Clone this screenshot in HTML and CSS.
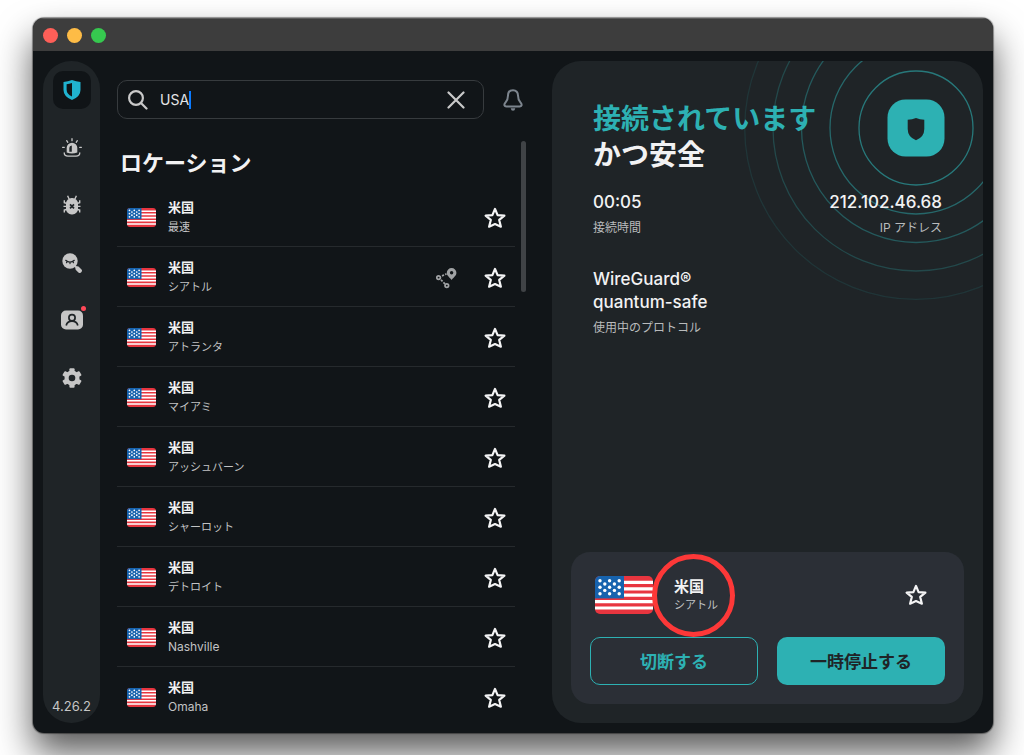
FILE: index.html
```html
<!DOCTYPE html>
<html lang="ja">
<head>
<meta charset="utf-8">
<meta name="viewport" content="width=device-width, initial-scale=1">
<title>VPN</title>
<link rel="stylesheet" href="styles.css">
</head>
<body>
<svg class="sprite" aria-hidden="true">
  <symbol id="flag" viewBox="0 0 58 38">
    <rect width="58" height="38" fill="#e8353f"/>
    <path d="M0 6.4h58M0 12.8h58M0 19.2h58M0 25.6h58M0 32h58" stroke="#fff" stroke-width="3.2"/>
    <rect width="29" height="22.4" fill="#1763ae"/>
    <g fill="#fff">
      <circle cx="5" cy="4.7" r="1.7"/><circle cx="14.6" cy="4.7" r="1.7"/><circle cx="24.2" cy="4.7" r="1.7"/>
      <circle cx="9.8" cy="8" r="1.7"/><circle cx="19.4" cy="8" r="1.7"/>
      <circle cx="5" cy="11.2" r="1.7"/><circle cx="14.6" cy="11.2" r="1.7"/><circle cx="24.2" cy="11.2" r="1.7"/>
      <circle cx="9.8" cy="14.4" r="1.7"/><circle cx="19.4" cy="14.4" r="1.7"/>
      <circle cx="5" cy="17.7" r="1.7"/><circle cx="14.6" cy="17.7" r="1.7"/><circle cx="24.2" cy="17.7" r="1.7"/>
    </g>
  </symbol>
  <symbol id="star" viewBox="0 0 22 22">
    <path d="M11 1.900l2.600 6.200 6.800.5-5.200 4.300 1.700 6.800-5.900-2.600-5.900 2.600 1.700-6.800L1.600 8.600l6.800-.5z" fill="none" stroke="#f4f4f5" stroke-width="2.200" stroke-linejoin="round"/>
  </symbol>
</svg>

<div class="window">
  <header class="titlebar">
    <button class="light light-close" aria-label="閉じる"></button>
    <button class="light light-min" aria-label="最小化"></button>
    <button class="light light-max" aria-label="最大化"></button>
  </header>

  <main class="layout">
    <aside class="sidebar">
      <nav class="nav">
        <button class="nav-item nav-active" aria-label="VPN">
          <svg width="20" height="22" viewBox="0 0 20 22"><path d="M1.500 3Q6 2.600 10 1q4 1.600 8.500 2v8q0 6.500-8.500 10Q1.500 17.500 1.500 11z" fill="#20b3d0"/><path d="M10 4v13.600Q4.600 15 4.600 10.500V5.300Q7.500 5 10 4z" fill="#101417"/></svg>
        </button>
        <button class="nav-item" aria-label="アラート">
          <svg width="20" height="20" viewBox="0 0 20 20"><path d="M4.700 14.500V10a5.300 5.300 0 0 1 10.600 0v4.500q-5.300 2-10.600 0z" fill="#c6c6c6"/><path d="M9.800 7.500v6.300H7.300V10q0-2.200 2.500-2.500z" fill="#1f2427"/><path d="M2.200 14.800q0 3.400 3.800 3.400h8q3.800 0 3.800-3.400M10 .7v2M4.700 2.700l1.100 1.600M15.300 2.700l-1.100 1.600M.6 9.300h1.700M17.700 9.300h1.700" fill="none" stroke="#c6c6c6" stroke-width="1.300" stroke-linecap="round"/></svg>
        </button>
        <button class="nav-item" aria-label="アンチウイルス">
          <svg width="20" height="20" viewBox="0 0 20 20"><path d="M5.600.8l1.600 3.400M14.400.8l-1.600 3.400M2.300 5.200v2.500l3 .8M17.700 5.200v2.500l-3 .8M1.500 11.400h17M2.300 17.500V15l3-.8M17.700 17.500V15l-3-.8" fill="none" stroke="#c6c6c6" stroke-width="1.400"/><rect x="4" y="3" width="12" height="16.500" rx="5.600" fill="#c6c6c6"/><path d="M8 9.300l4 4M12 9.300l-4 4" stroke="#1f2427" stroke-width="1.700"/></svg>
        </button>
        <button class="nav-item" aria-label="検索">
          <svg width="20" height="20" viewBox="0 0 20 20"><circle cx="8" cy="8" r="7.700" fill="#c6c6c6"/><path d="M12.500 12.500l2.500 2.500" stroke="#c6c6c6" stroke-width="2"/><path d="M15.700 15.700l2 2" stroke="#c6c6c6" stroke-width="4.400" stroke-linecap="round"/><path d="M3.700 7.300q4.300 3.500 8.600 0M5.200 8.400l-.7 1.300M8 9v1.600M10.800 8.400l.7 1.300" fill="none" stroke="#1f2427" stroke-width="1.200" stroke-linecap="round"/></svg>
        </button>
        <button class="nav-item" aria-label="プロフィール">
          <svg width="22" height="20" viewBox="0 0 22 20"><rect y=".5" width="22" height="19" rx="5" fill="#c6c6c6"/><circle cx="11" cy="7.800" r="3.100" fill="none" stroke="#1f2427" stroke-width="1.700"/><path d="M5.200 15.500q1-4.300 5.800-4.300t5.800 4.300" fill="none" stroke="#1f2427" stroke-width="1.700"/></svg>
          <span class="dot"></span>
        </button>
        <button class="nav-item" aria-label="設定">
          <svg width="20" height="20" viewBox="0 0 20 20"><g fill="#c6c6c6"><rect x="7.400" y=".2" width="5.200" height="19.600" rx="1"/><rect x="7.400" y=".2" width="5.200" height="19.600" rx="1" transform="rotate(60 10 10)"/><rect x="7.400" y=".2" width="5.200" height="19.600" rx="1" transform="rotate(120 10 10)"/><circle cx="10" cy="10" r="7.500"/></g><circle cx="10" cy="10" r="3.300" fill="#1f2427"/></svg>
        </button>
      </nav>
      <span class="version">4.26.2</span>
    </aside>

    <section class="browse">
      <div class="toolbar">
        <div class="search">
          <svg width="20" height="20" viewBox="0 0 20 20" fill="none" stroke="#c9c9c9" stroke-width="2.200" stroke-linecap="round"><circle cx="8" cy="8" r="6.900"/><path d="M13.200 13.200l5.300 5.300"/></svg>
          <label class="search-text"><input class="search-input" type="text" value="USA" size="3" aria-label="検索"><span class="caret"></span></label>
          <button class="icon-button" aria-label="クリア"><svg width="18" height="18" viewBox="0 0 18 18" stroke="#c9c9c9" stroke-width="2.200" stroke-linecap="round"><path d="M1.500 1.500l15 15M16.500 1.500l-15 15"/></svg></button>
        </div>
        <button class="icon-button" aria-label="通知"><svg width="20" height="22" viewBox="0 0 20 22"><path d="M10 1.200c-3.300 0-5 2.300-5 5.300 0 4.500-1.100 5.400-2.800 7.400-1.500 1.800-.8 3.600 1.100 3.600h13.400c1.900 0 2.600-1.800 1.100-3.600-1.700-2-2.800-2.900-2.800-7.400 0-3-1.700-5.300-5-5.300z" fill="none" stroke="#7d858e" stroke-width="2"/><path d="M7.700 19.200h4.600q-.4 2.500-2.300 2.500t-2.300-2.500z" fill="#7d858e"/></svg></button>
      </div>

      <div class="scroller">
        <div class="locations">
          <h2 class="heading">ロケーション</h2>
          <ul class="list">
            <li class="row"><svg class="flag"><use href="#flag"/></svg><div class="place"><strong>米国</strong><span>最速</span></div><button class="icon-button" aria-label="お気に入り"><svg class="star"><use href="#star"/></svg></button></li>
            <li class="row"><svg class="flag"><use href="#flag"/></svg><div class="place"><strong>米国</strong><span>シアトル</span></div>
              <svg class="route" width="22" height="22" viewBox="0 0 22 22"><path d="M16.600 1a4.800 4.800 0 0 0-4.800 4.800c0 3.200 3 4.700 4.800 7.200 1.800-2.500 4.800-4 4.800-7.200A4.800 4.800 0 0 0 16.600 1z" fill="#a0a2a4"/><circle cx="16.600" cy="5.700" r="1.700" fill="#111518"/><g fill="none" stroke="#a0a2a4" stroke-width="1.700"><circle cx="3.600" cy="10.600" r="1.800"/><circle cx="11.800" cy="18.600" r="1.800"/><path d="M7 8.900l4.500-2" stroke-dasharray="2.200 1.200"/><path d="M6 12.900l4 4" stroke-dasharray="2.200 1.200"/></g></svg>
              <button class="icon-button" aria-label="お気に入り"><svg class="star"><use href="#star"/></svg></button></li>
            <li class="row"><svg class="flag"><use href="#flag"/></svg><div class="place"><strong>米国</strong><span>アトランタ</span></div><button class="icon-button" aria-label="お気に入り"><svg class="star"><use href="#star"/></svg></button></li>
            <li class="row"><svg class="flag"><use href="#flag"/></svg><div class="place"><strong>米国</strong><span>マイアミ</span></div><button class="icon-button" aria-label="お気に入り"><svg class="star"><use href="#star"/></svg></button></li>
            <li class="row"><svg class="flag"><use href="#flag"/></svg><div class="place"><strong>米国</strong><span>アッシュバーン</span></div><button class="icon-button" aria-label="お気に入り"><svg class="star"><use href="#star"/></svg></button></li>
            <li class="row"><svg class="flag"><use href="#flag"/></svg><div class="place"><strong>米国</strong><span>シャーロット</span></div><button class="icon-button" aria-label="お気に入り"><svg class="star"><use href="#star"/></svg></button></li>
            <li class="row"><svg class="flag"><use href="#flag"/></svg><div class="place"><strong>米国</strong><span>デトロイト</span></div><button class="icon-button" aria-label="お気に入り"><svg class="star"><use href="#star"/></svg></button></li>
            <li class="row"><svg class="flag"><use href="#flag"/></svg><div class="place"><strong>米国</strong><span class="latin">Nashville</span></div><button class="icon-button" aria-label="お気に入り"><svg class="star"><use href="#star"/></svg></button></li>
            <li class="row"><svg class="flag"><use href="#flag"/></svg><div class="place"><strong>米国</strong><span class="latin">Omaha</span></div><button class="icon-button" aria-label="お気に入り"><svg class="star"><use href="#star"/></svg></button></li>
          </ul>
        </div>
        <div class="thumb"></div>
      </div>
    </section>

    <section class="panel">
      <svg class="rings" width="344" height="344" viewBox="0 0 344 344" fill="none" stroke="#2db1b3">
        <circle cx="172" cy="172" r="57" opacity=".6" stroke-width="1.300"/>
        <circle cx="172" cy="172" r="86" opacity=".48" stroke-width="1.300"/>
        <circle cx="172" cy="172" r="114.500" opacity=".38" stroke-width="1.300"/>
        <circle cx="172" cy="172" r="143" opacity=".26" stroke-width="1.300"/>
        <circle cx="172" cy="172" r="171.300" opacity=".12" stroke-width="1.300"/>
        <rect x="143.500" y="143.500" width="57" height="57" rx="18" fill="#2db1b3" stroke="none"/>
        <path d="M163.700 163.700q4.500 0 8.300-1.700 3.800 1.700 8.300 1.700v9.300q0 8-8.300 11.200-8.300-3.200-8.300-11.200z" fill="#1f2427" stroke="none"/>
      </svg>
      <div class="status">
        <h1 class="title"><span class="accent">接続されています</span><br>かつ安全</h1>
        <div class="stats">
          <div class="stat"><span class="value">00:05</span><span class="label">接続時間</span></div>
          <div class="stat stat-end"><span class="value">212.102.46.68</span><span class="label">IP アドレス</span></div>
        </div>
        <div class="stat"><span class="value">WireGuard®<br>quantum-safe</span><span class="label">使用中のプロトコル</span></div>
      </div>

      <div class="card">
        <div class="current">
          <svg class="flag-large"><use href="#flag"/></svg>
          <div class="current-place"><strong>米国</strong><span>シアトル</span><i class="marker"></i></div>
          <button class="icon-button" aria-label="お気に入り"><svg class="star"><use href="#star"/></svg></button>
        </div>
        <div class="actions">
          <button class="action action-outline">切断する</button>
          <button class="action action-solid">一時停止する</button>
        </div>
      </div>
    </section>
  </main>
</div>
</body>
</html>
```

FILE: styles.css
```css
* { box-sizing: border-box; }

body {
  margin: 0;
  padding: 18px 31px 22px 33px;
  height: 100vh;
  display: flex;
  overflow: hidden;
  background: #fff;
  color: #f2f2f3;
  font-family: Inter, "Noto Sans CJK JP", sans-serif;
}

button {
  padding: 0;
  border: 0;
  background: none;
  color: inherit;
  font: inherit;
  cursor: pointer;
}

svg { display: block; flex: none; }
.sprite { position: absolute; width: 0; height: 0; }

.window {
  flex: 1;
  min-width: 0;
  display: flex;
  flex-direction: column;
  border-radius: 11px;
  overflow: hidden;
  background: #111518;
  box-shadow: 0 0 1px 1px rgba(0, 0, 0, .4), 0 20px 36px rgba(0, 0, 0, .65);
}

.titlebar {
  flex: none;
  display: flex;
  align-items: center;
  gap: 9px;
  height: 33px;
  padding: 0 10px;
  background: #3d3d3d;
  border-top: 1px solid #5c5c5c;
}

.light { width: 15px; height: 15px; border-radius: 50%; }
.light-close { background: #fe5f58; }
.light-min { background: #febc46; }
.light-max { background: #36c84f; }

.layout {
  flex: 1;
  min-height: 0;
  display: grid;
  grid-template-columns: 57px minmax(0, 452fr) minmax(0, 431fr);
  grid-template-rows: minmax(0, 1fr);
  padding: 10px;
}

.sidebar {
  display: flex;
  flex-direction: column;
  align-items: center;
  justify-content: space-between;
  padding: 10px 0 8px;
  border-radius: 28px;
  background: #1f2427;
}

.nav {
  display: flex;
  flex-direction: column;
  justify-content: space-between;
  height: 326px;
}

.nav-item {
  position: relative;
  display: grid;
  place-items: center;
  width: 38px;
  height: 38px;
  border-radius: 10px;
}

.nav-active { background: #101417; }

.dot {
  position: absolute;
  top: 5px;
  right: 5px;
  width: 5px;
  height: 5px;
  border-radius: 50%;
  background: #ff4858;
}

.version { font-size: 13px; line-height: 18px; color: #c6c6c6; }

.browse {
  display: flex;
  flex-direction: column;
  gap: 22px;
  margin: 0 26px 0 17px;
  padding-top: 19px;
  min-height: 0;
}

.toolbar { display: flex; align-items: center; gap: 19px; padding-right: 3px; }

.search {
  flex: 1;
  display: flex;
  align-items: center;
  gap: 12px;
  height: 39px;
  padding: 0 18px 0 10px;
  border: 1px solid #373b3e;
  border-radius: 10px;
}

.search-text { flex: 1; display: flex; align-items: center; }

.search-input {
  field-sizing: content;
  padding: 0;
  border: 0;
  outline: 0;
  background: none;
  color: #e4e4e5;
  font: 14px/20px Inter, "Noto Sans CJK JP", sans-serif;
}

.caret { width: 2px; height: 18px; background: #0a7aff; }

.scroller { flex: 1; min-height: 0; display: flex; gap: 6px; }
.locations { flex: 1; overflow: hidden; }
.thumb { width: 5px; height: 151px; border-radius: 3px; background: #404346; }

.heading {
  margin: 0;
  padding: 0 3px 2px;
  font-size: 22px;
  line-height: 44px;
  font-weight: 600;
}

.list { margin: 0; padding: 0; list-style: none; }

.row {
  display: flex;
  align-items: center;
  height: 60px;
  padding: 2px 9px 0 10px;
  border-bottom: 1px solid #262a2d;
}

.flag { width: 29px; height: 19px; border-radius: 3px; }
.star { width: 22px; height: 22px; }
.route { margin-right: 27px; }

.place { flex: 1; display: flex; flex-direction: column; margin-left: 12px; }
.place strong { font-size: 13px; line-height: 19px; font-weight: 700; }
.place span { font-size: 11px; line-height: 20px; color: #c2c3c4; }
.place .latin { font-size: 12px; }

.panel {
  position: relative;
  display: flex;
  flex-direction: column;
  justify-content: space-between;
  padding: 40px 19px 19px;
  border-radius: 29px;
  overflow: hidden;
  background: #1f2427;
}

.rings { position: absolute; top: -105px; right: -105px; }

.status {
  position: relative;
  display: flex;
  flex-direction: column;
  gap: 30px;
  padding: 0 22px;
}

.title { margin: 0 0 -12px; font-size: 28px; line-height: 36px; font-weight: 600; }
.accent { color: #2db1b3; }

.stats { display: flex; justify-content: space-between; }
.stat { display: flex; flex-direction: column; gap: 4px; }
.stat-end { text-align: right; }
.value { font-size: 17px; line-height: 23px; font-weight: 500; }
.label { font-size: 12px; line-height: 20px; color: #b9bbbc; }

.card { padding: 19px; border-radius: 19px; background: #2b2f36; }

.current {
  display: flex;
  align-items: center;
  height: 47px;
  padding: 0 18px 0 5px;
  margin-bottom: 19px;
}

.flag-large { width: 58px; height: 38px; border-radius: 5px; }

.current-place {
  position: relative;
  display: flex;
  flex-direction: column;
  margin: 0 auto 0 21px;
}

.current-place strong { font-size: 15px; line-height: 20px; font-weight: 700; }
.current-place span { font-size: 11px; line-height: 16px; color: #c2c3c4; }

.marker {
  position: absolute;
  top: -23px;
  left: -22px;
  width: 83px;
  height: 83px;
  border: 5px solid #fd3838;
  border-radius: 50%;
}

.actions { display: grid; grid-template-columns: 1fr 1fr; gap: 19px; }

.action {
  height: 48px;
  padding-bottom: 2px;
  border-radius: 10px;
  font-size: 17px;
  font-weight: 700;
}
.action-outline { border: 1px solid #2db1b3; color: #2db1b3; }
.action-solid { background: #2db1b3; color: #1f2427; }
```
